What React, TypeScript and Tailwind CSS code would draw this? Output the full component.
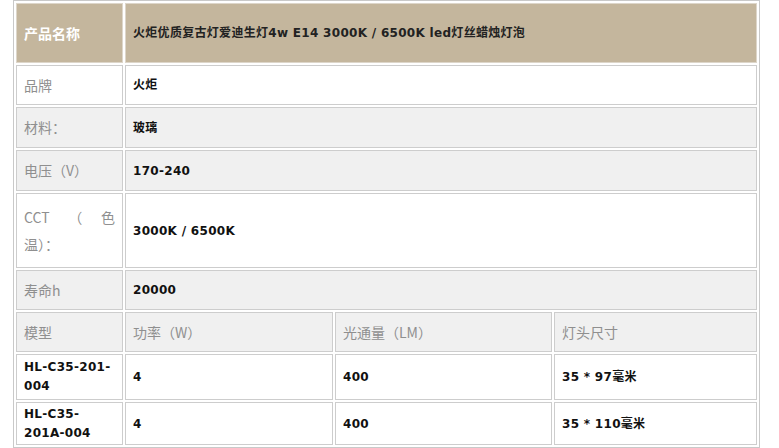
const label = "font-['Noto_Sans_CJK_SC',sans-serif] text-[14px] text-[#8f8f8f]";
const value =
  "font-['DejaVu_Sans','Noto_Sans_CJK_SC',sans-serif] text-[12px] font-bold tracking-[0.3px] text-[#111]";
const headValue =
  "font-['DejaVu_Sans','Noto_Sans_CJK_SC',sans-serif] text-[12px] font-bold tracking-[0.3px] text-[#222]";

function Cell({
  children,
  className = "",
  bg = "bg-white",
}: {
  children: React.ReactNode;
  className?: string;
  bg?: string;
}) {
  return (
    <div className={`flex items-center border border-[#cdcdcd] pl-[7px] pr-[7px] ${bg} ${className}`}>
      {children}
    </div>
  );
}

export default function App() {
  const gray = "bg-[#f0f0f0]";

  return (
    <div className="w-[779px] h-[448px] bg-white">
      <div className="ml-[13px] w-[747px] border border-[#c9c9c9] p-[2px]">
        <div className="grid grid-cols-[107px_208px_217px_203px] grid-rows-[60px_40px_41px_41px_75px_40px_40px_46px_43px] gap-[2px]">
          {/* header */}
          <Cell bg="bg-[#c4b69d]" className="border-[#ddd6ca]">
            <span className="font-['Noto_Sans_CJK_SC',sans-serif] text-[14px] font-bold text-white">产品名称</span>
          </Cell>
          <Cell bg="bg-[#c4b69d]" className="col-span-3 border-[#ddd6ca]">
            <span className={headValue}>火炬优质复古灯爱迪生灯4w E14 3000K / 6500K led灯丝蜡烛灯泡</span>
          </Cell>

          <Cell>
            <span className={label}>品牌</span>
          </Cell>
          <Cell className="col-span-3">
            <span className={value}>火炬</span>
          </Cell>

          <Cell bg={gray}>
            <span className={label}>材料：</span>
          </Cell>
          <Cell bg={gray} className="col-span-3">
            <span className={value}>玻璃</span>
          </Cell>

          <Cell bg={gray}>
            <span className={label}>电压（V）</span>
          </Cell>
          <Cell bg={gray} className="col-span-3">
            <span className={value}>170-240</span>
          </Cell>

          <Cell>
            <div className={`${label} w-full leading-[27px]`}>
              <div className="flex justify-between">
                <span>CCT</span>
                <span>（</span>
                <span>色</span>
              </div>
              <div>温）：</div>
            </div>
          </Cell>
          <Cell className="col-span-3">
            <span className={value}>3000K / 6500K</span>
          </Cell>

          <Cell bg={gray}>
            <span className={label}>寿命h</span>
          </Cell>
          <Cell bg={gray} className="col-span-3">
            <span className={value}>20000</span>
          </Cell>

          <Cell bg={gray}>
            <span className={label}>模型</span>
          </Cell>
          <Cell bg={gray}>
            <span className={label}>功率（W）</span>
          </Cell>
          <Cell bg={gray}>
            <span className={label}>光通量（LM）</span>
          </Cell>
          <Cell bg={gray}>
            <span className={label}>灯头尺寸</span>
          </Cell>

          <Cell>
            <span className={`${value} leading-[19px]`}>
              HL-C35-201-
              <br />
              004
            </span>
          </Cell>
          <Cell>
            <span className={value}>4</span>
          </Cell>
          <Cell>
            <span className={value}>400</span>
          </Cell>
          <Cell>
            <span className={value}>35 * 97毫米</span>
          </Cell>

          <Cell>
            <span className={`${value} leading-[19px]`}>
              HL-C35-
              <br />
              201A-004
            </span>
          </Cell>
          <Cell>
            <span className={value}>4</span>
          </Cell>
          <Cell>
            <span className={value}>400</span>
          </Cell>
          <Cell>
            <span className={value}>35 * 110毫米</span>
          </Cell>
        </div>
      </div>
    </div>
  );
}
